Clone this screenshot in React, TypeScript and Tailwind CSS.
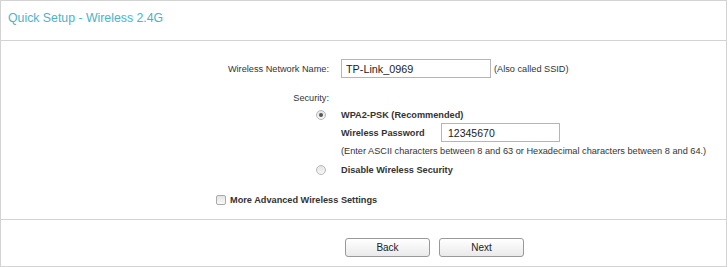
import React from "react";

function Radio({ checked }: { checked?: boolean }) {
  return (
    <span className="flex h-[10px] w-[10px] shrink-0 items-center justify-center rounded-full border border-[#b8b8b8] bg-gradient-to-b from-[#e4e4e4] to-[#f8f8f8]">
      {checked && <span className="h-[4px] w-[4px] rounded-full bg-[#555]" />}
    </span>
  );
}

export default function App() {
  return (
    <div
      className="flex h-[267px] w-[727px] flex-col overflow-hidden border border-[#d3d3d3] bg-white text-[9.2px] leading-[14px] text-[#333]"
      style={{ fontFamily: '"Liberation Sans", Arial, sans-serif' }}
    >
      <div className="h-[40px] shrink-0 border-b border-[#d3d3d3] pl-[7px] pt-[10px]">
        <span className="text-[12.3px] leading-[15px] text-[#4cb3c8]">Quick Setup - Wireless 2.4G</span>
      </div>

      <div className="flex h-[179px] shrink-0 flex-col border-b border-[#d3d3d3]">
        <div className="mt-[18px] flex h-[19px] items-center">
          <div className="w-[328px] shrink-0 text-right">Wireless Network Name:</div>
          <div className="ml-[12px] flex h-[19px] w-[150px] shrink-0 items-center border border-[#b5b5b5] pl-[4px] text-[10.8px] text-[#222]">
            TP-Link_0969
          </div>
          <div className="ml-[3px] shrink-0">(Also called SSID)</div>
        </div>

        <div className="mt-[13px] flex h-[14px] items-center">
          <div className="w-[328px] shrink-0 text-right">Security:</div>
        </div>

        <div className="mt-[3px] flex h-[14px] items-center">
          <div className="flex w-[340px] shrink-0 justify-end pr-[15px]">
            <Radio checked />
          </div>
          <span className="shrink-0 font-bold">WPA2-PSK (Recommended)</span>
        </div>

        <div className="mt-[1px] flex h-[19px] items-center">
          <div className="w-[340px] shrink-0" />
          <span className="w-[100px] shrink-0 font-bold">Wireless Password</span>
          <div className="flex h-[19px] w-[119px] shrink-0 items-center border border-[#b5b5b5] pl-[6px] text-[10.5px] text-[#222]">
            12345670
          </div>
        </div>

        <div className="mt-[2px] flex h-[14px] items-center">
          <div className="w-[340px] shrink-0" />
          <span className="shrink-0 whitespace-nowrap">
            (Enter ASCII characters between 8 and 63 or Hexadecimal characters between 8 and 64.)
          </span>
        </div>

        <div className="mt-[5px] flex h-[14px] items-center">
          <div className="flex w-[340px] shrink-0 justify-end pr-[15px]">
            <Radio />
          </div>
          <span className="shrink-0 font-bold">Disable Wireless Security</span>
        </div>

        <div className="mt-[16px] flex h-[14px] items-center">
          <div className="w-[215px] shrink-0" />
          <span className="h-[10px] w-[10px] shrink-0 rounded-[2px] border border-[#aaa] bg-gradient-to-b from-[#e4e4e4] to-[#f8f8f8]" />
          <span className="ml-[4px] shrink-0 font-bold">More Advanced Wireless Settings</span>
        </div>
      </div>

      <div className="flex pt-[18px]">
        <div className="w-[344px] shrink-0" />
        <button className="h-[19px] w-[85px] shrink-0 rounded-[3px] border border-[#999] bg-gradient-to-b from-[#ffffff] to-[#eaeaea] text-[10px] leading-[17px] text-[#222]">
          Back
        </button>
        <button className="ml-[9px] h-[19px] w-[85px] shrink-0 rounded-[3px] border border-[#999] bg-gradient-to-b from-[#ffffff] to-[#eaeaea] text-[10px] leading-[17px] text-[#222]">
          Next
        </button>
      </div>
    </div>
  );
}
